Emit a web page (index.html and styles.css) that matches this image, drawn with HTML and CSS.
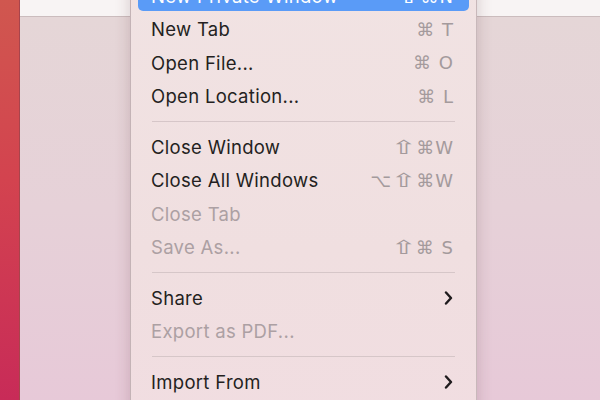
FILE: index.html
```html
<!DOCTYPE html>
<html lang="en">
<head>
    <meta charset="UTF-8">
    <title>File menu</title>
    <link rel="stylesheet" href="styles.css">
</head>
<body>
    <div class="desktop">
        <div class="wallpaper"></div>
        <div class="window">
            <div class="titlebar"></div>
            <div class="content"></div>

            <div class="menu">
                <div class="item active"><span>New Private Window</span><span class="keys"><span class="sh">⇧</span>⌘N</span></div>
                <div class="item"><span>New Tab</span><span class="keys">⌘ T</span></div>
                <div class="item"><span>Open File...</span><span class="keys">⌘ O</span></div>
                <div class="item"><span>Open Location...</span><span class="keys">⌘ L</span></div>
                <div class="sep"></div>
                <div class="item"><span>Close Window</span><span class="keys"><span class="sh">⇧</span>⌘W</span></div>
                <div class="item"><span>Close All Windows</span><span class="keys">⌥<span class="sh">⇧</span>⌘W</span></div>
                <div class="item off"><span>Close Tab</span></div>
                <div class="item off"><span>Save As...</span><span class="keys"><span class="sh">⇧</span>⌘ S</span></div>
                <div class="sep"></div>
                <div class="item">
                    <span>Share</span>
                    <svg class="chev" width="9" height="14" viewBox="0 0 9 14"><path d="M2 1.5 L7 7 L2 12.5" fill="none" stroke="currentColor" stroke-width="2.4" stroke-linecap="round" stroke-linejoin="round"/></svg>
                </div>
                <div class="item off"><span>Export as PDF...</span></div>
                <div class="sep"></div>
                <div class="item">
                    <span>Import From</span>
                    <svg class="chev" width="9" height="14" viewBox="0 0 9 14"><path d="M2 1.5 L7 7 L2 12.5" fill="none" stroke="currentColor" stroke-width="2.4" stroke-linecap="round" stroke-linejoin="round"/></svg>
                </div>
            </div>
        </div>
    </div>
</body>
</html>
```

FILE: styles.css
```css
html, body { margin: 0; padding: 0; }
body { font-family: Inter, 'Noto Sans', sans-serif; background: #e6d3d7; }

.desktop { display: flex; width: 600px; height: 400px; overflow: hidden; }

.wallpaper {
    width: 19px;
    flex: none;
    background: linear-gradient(180deg, #d0574f 0%, #d3434f 45%, #c82b58 100%);
    border-right: 1px solid #a8444c;
}

.window { position: relative; flex: 1; display: flex; flex-direction: column; }
.titlebar { height: 16px; background: #f8f4f4; border-bottom: 1px solid #cbbcbd; flex: none; }
.content { flex: 1; background: linear-gradient(180deg, #e5d6d7 0%, #e6d1d8 50%, #e7c9d8 100%); }

.menu {
    position: absolute;
    top: -27px;
    left: 110px;
    width: 347px;
    height: 460px;
    padding-top: 6px;
    box-sizing: border-box;
    background: linear-gradient(180deg, #f1e3e3 0%, #f0dfe0 60%, #f1dde1 100%);
    border-left: 1px solid #c4b3b6;
    border-right: 1px solid #c8b8ba;
    box-shadow: 0 0 14px rgba(90, 50, 60, 0.22);
    font-size: 18.5px;
    letter-spacing: 0.3px;
    color: #241f21;
}

.item {
    height: 33.5px;
    margin: 0 7px;
    padding: 0 15px 0 13px;
    display: flex;
    align-items: center;
    justify-content: space-between;
    border-radius: 5px;
    box-sizing: border-box;
}
.item.active { background: #5a9bf7; color: #fff; height: 29.5px; margin: 2px 7px; }
.item.active .keys { color: #fff; }
.item.off { color: #aca0a3; }

.keys { color: #a49a9c; font-family: 'DejaVu Sans', sans-serif; font-size: 18px; letter-spacing: 1px; }
.keys .sh { display: inline-block; font-size: 19px; transform: scaleX(1.7); margin: 0 3px 0 4px; }
.chev { margin-right: 1px; color: #1f1b1d; }

.sep { height: 17px; display: flex; align-items: center; padding: 0 21px; }
.sep::before { content: ""; flex: 1; height: 1px; background: #d6c6c8; }
```
